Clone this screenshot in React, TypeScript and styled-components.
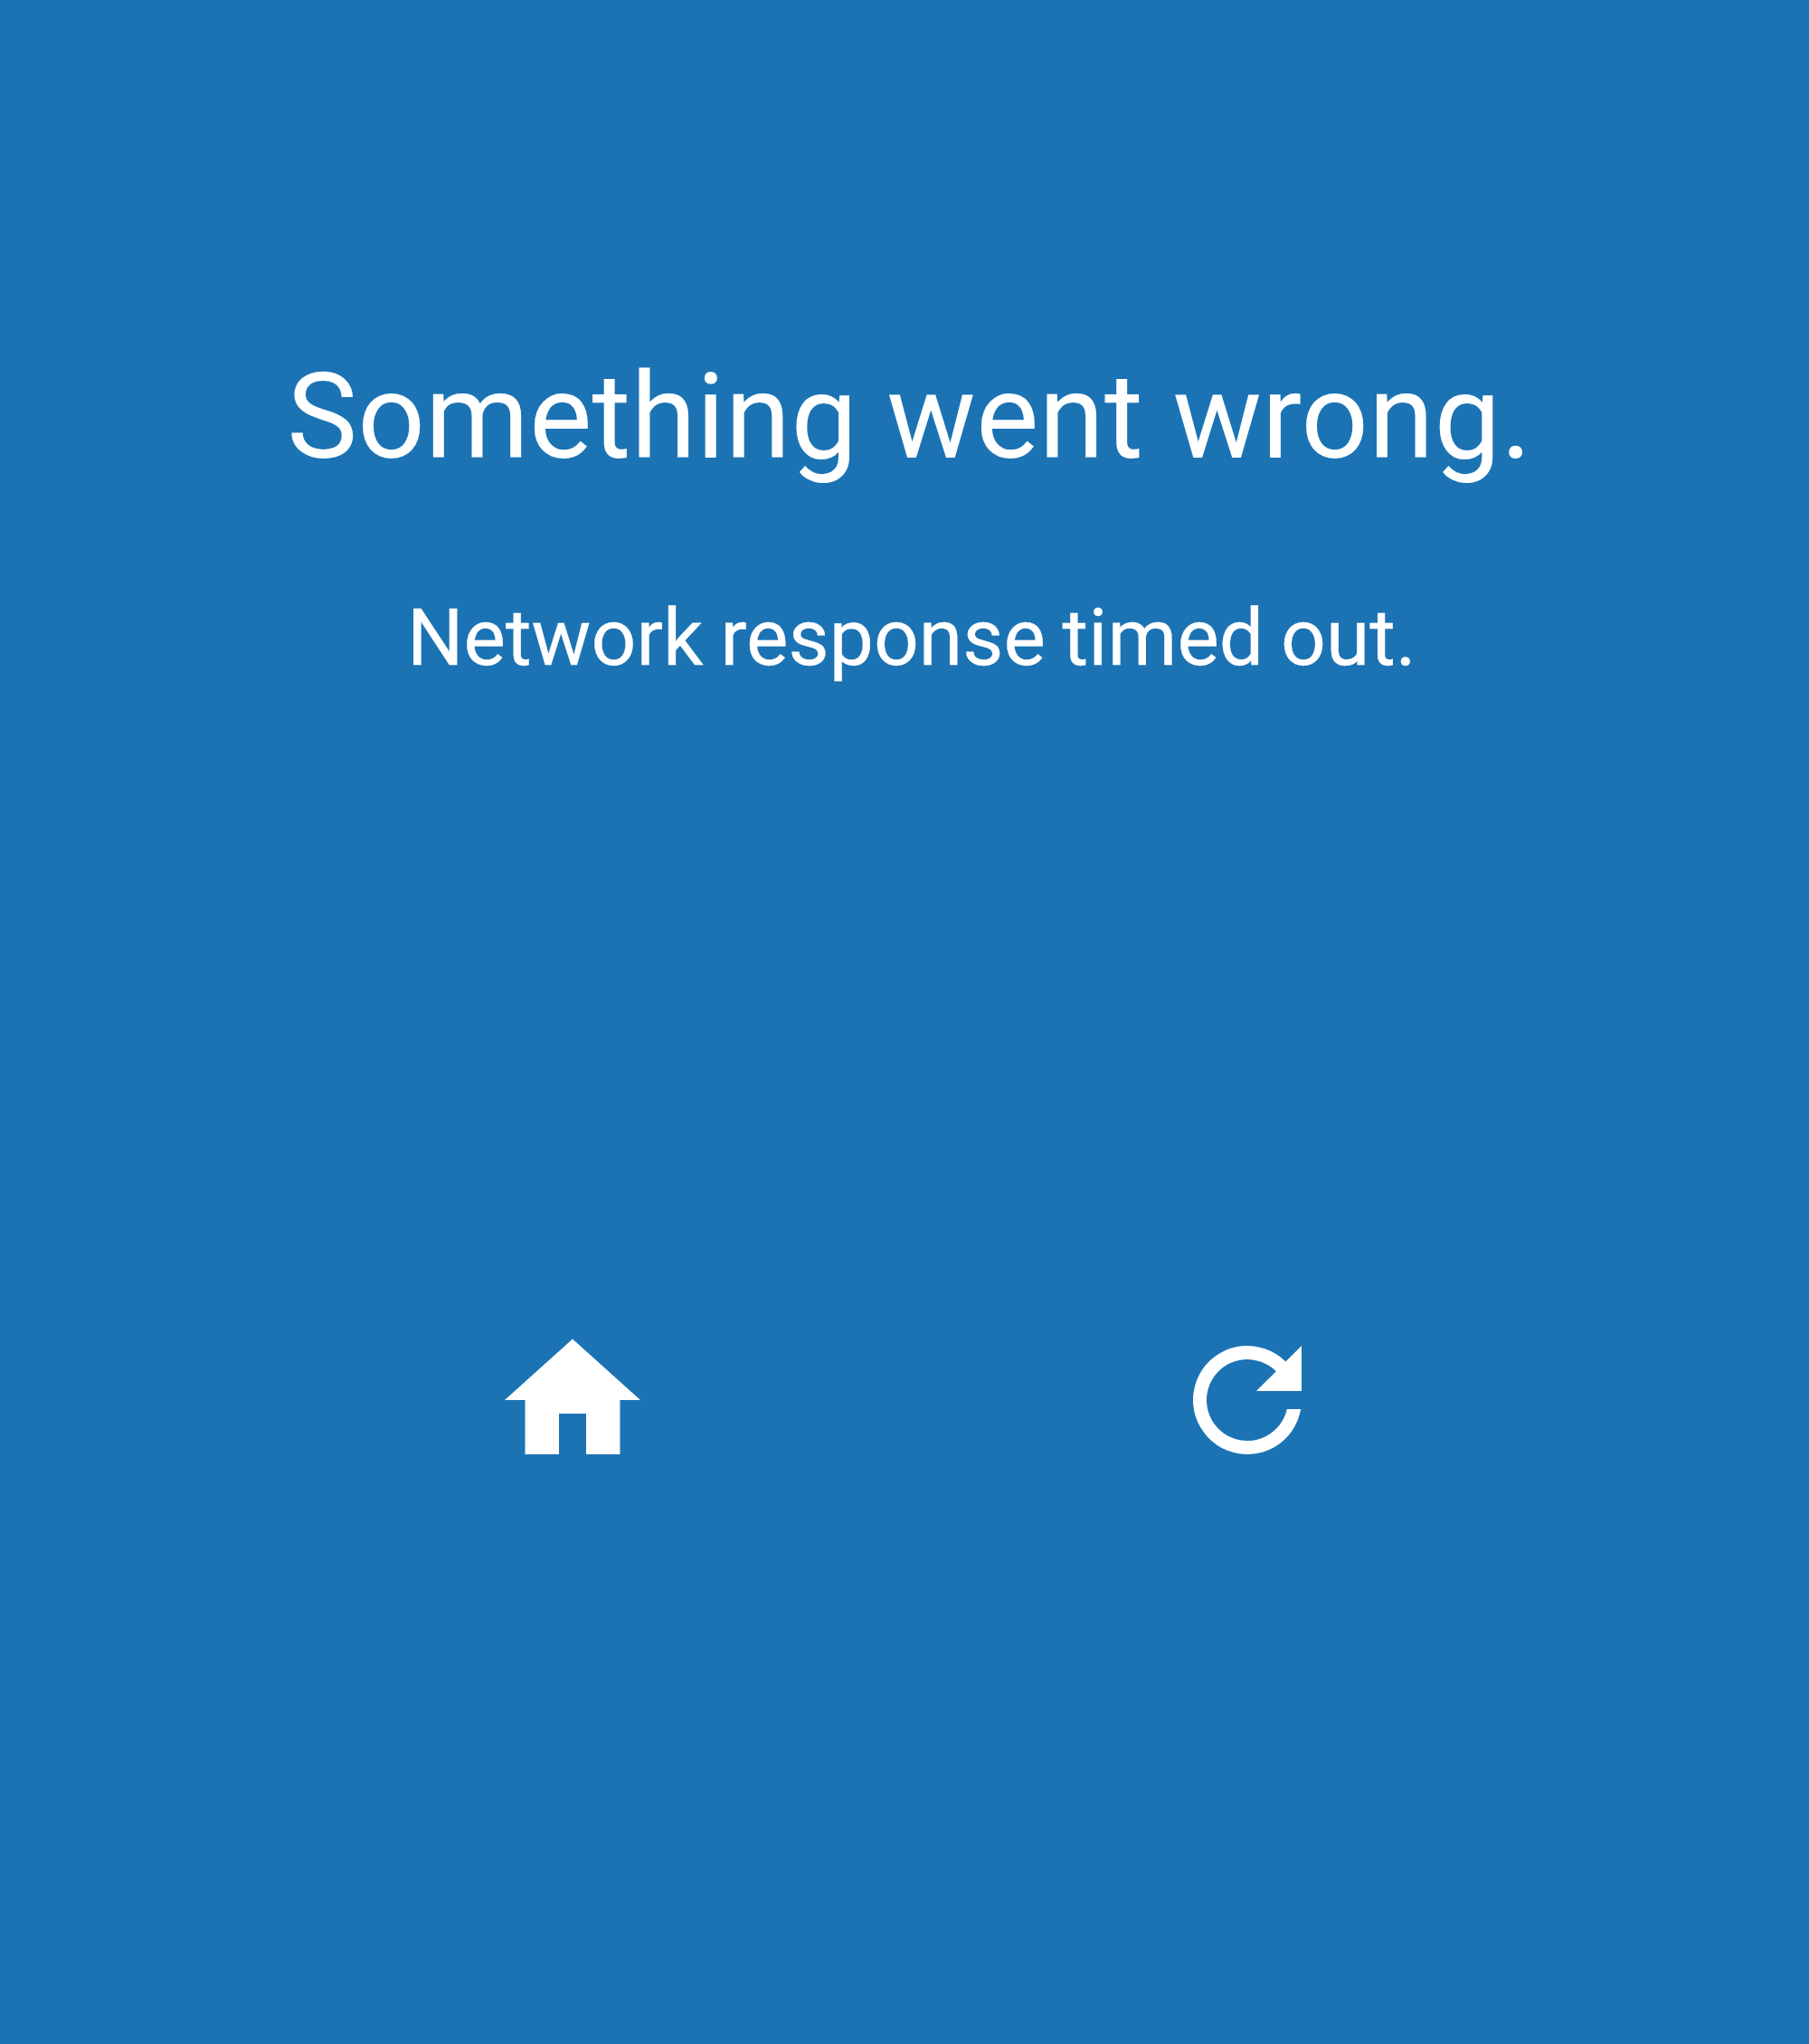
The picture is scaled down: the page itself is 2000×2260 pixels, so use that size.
import React from "react";
import styled, { createGlobalStyle } from "styled-components";

const GlobalStyle = createGlobalStyle`
  * { box-sizing: border-box; }
  body { margin: 0; background: #1b73b4; }
`;

const Screen = styled.main`
  display: flex;
  flex-direction: column;
  align-items: center;
  height: 2260px;
  padding-top: 386px;
  background: #1b73b4;
  color: #fff;
  font-family: Roboto, "Liberation Sans", sans-serif;
`;

const Title = styled.h1`
  margin: 0 0 0 11px;
  font-size: 131.2px;
  font-weight: 400;
  line-height: 150px;
  white-space: nowrap;
`;

const Message = styled.p`
  margin: 119px 0 0 16px;
  font-size: 87.6px;
  font-weight: 400;
  line-height: 100px;
  word-spacing: -3px;
  white-space: nowrap;
  -webkit-text-stroke: 0.3px currentColor;
`;

const Actions = styled.nav`
  display: grid;
  grid-template-columns: 180px 180px;
  column-gap: 566px;
  margin: 703px 0 0 12px;
`;

const ActionButton = styled.button`
  width: 180px;
  height: 180px;
  padding: 0;
  border: 0;
  background: none;
  color: inherit;
`;

const Icon = styled.svg`
  display: block;
  width: 180px;
  height: 180px;
  fill: currentColor;
`;

export default function App() {
  return (
    <>
      <GlobalStyle />
      <Screen>
        <Title>Something went wrong.</Title>
        <Message>Network response timed out.</Message>
        <Actions>
          <ActionButton aria-label="Home">
            <Icon viewBox="0 0 24 24">
              <path d="M10 20v-6h4v6h5v-8h3L12 3 2 12h3v8z" />
            </Icon>
          </ActionButton>
          <ActionButton aria-label="Retry">
            <Icon viewBox="0 0 24 24">
              <path d="M17.66 6.34A8 8 0 1 0 19.89 13.33H17.85A6 6 0 1 1 16.24 7.76L13.33 10.67H20V4z" />
            </Icon>
          </ActionButton>
        </Actions>
      </Screen>
    </>
  );
}
